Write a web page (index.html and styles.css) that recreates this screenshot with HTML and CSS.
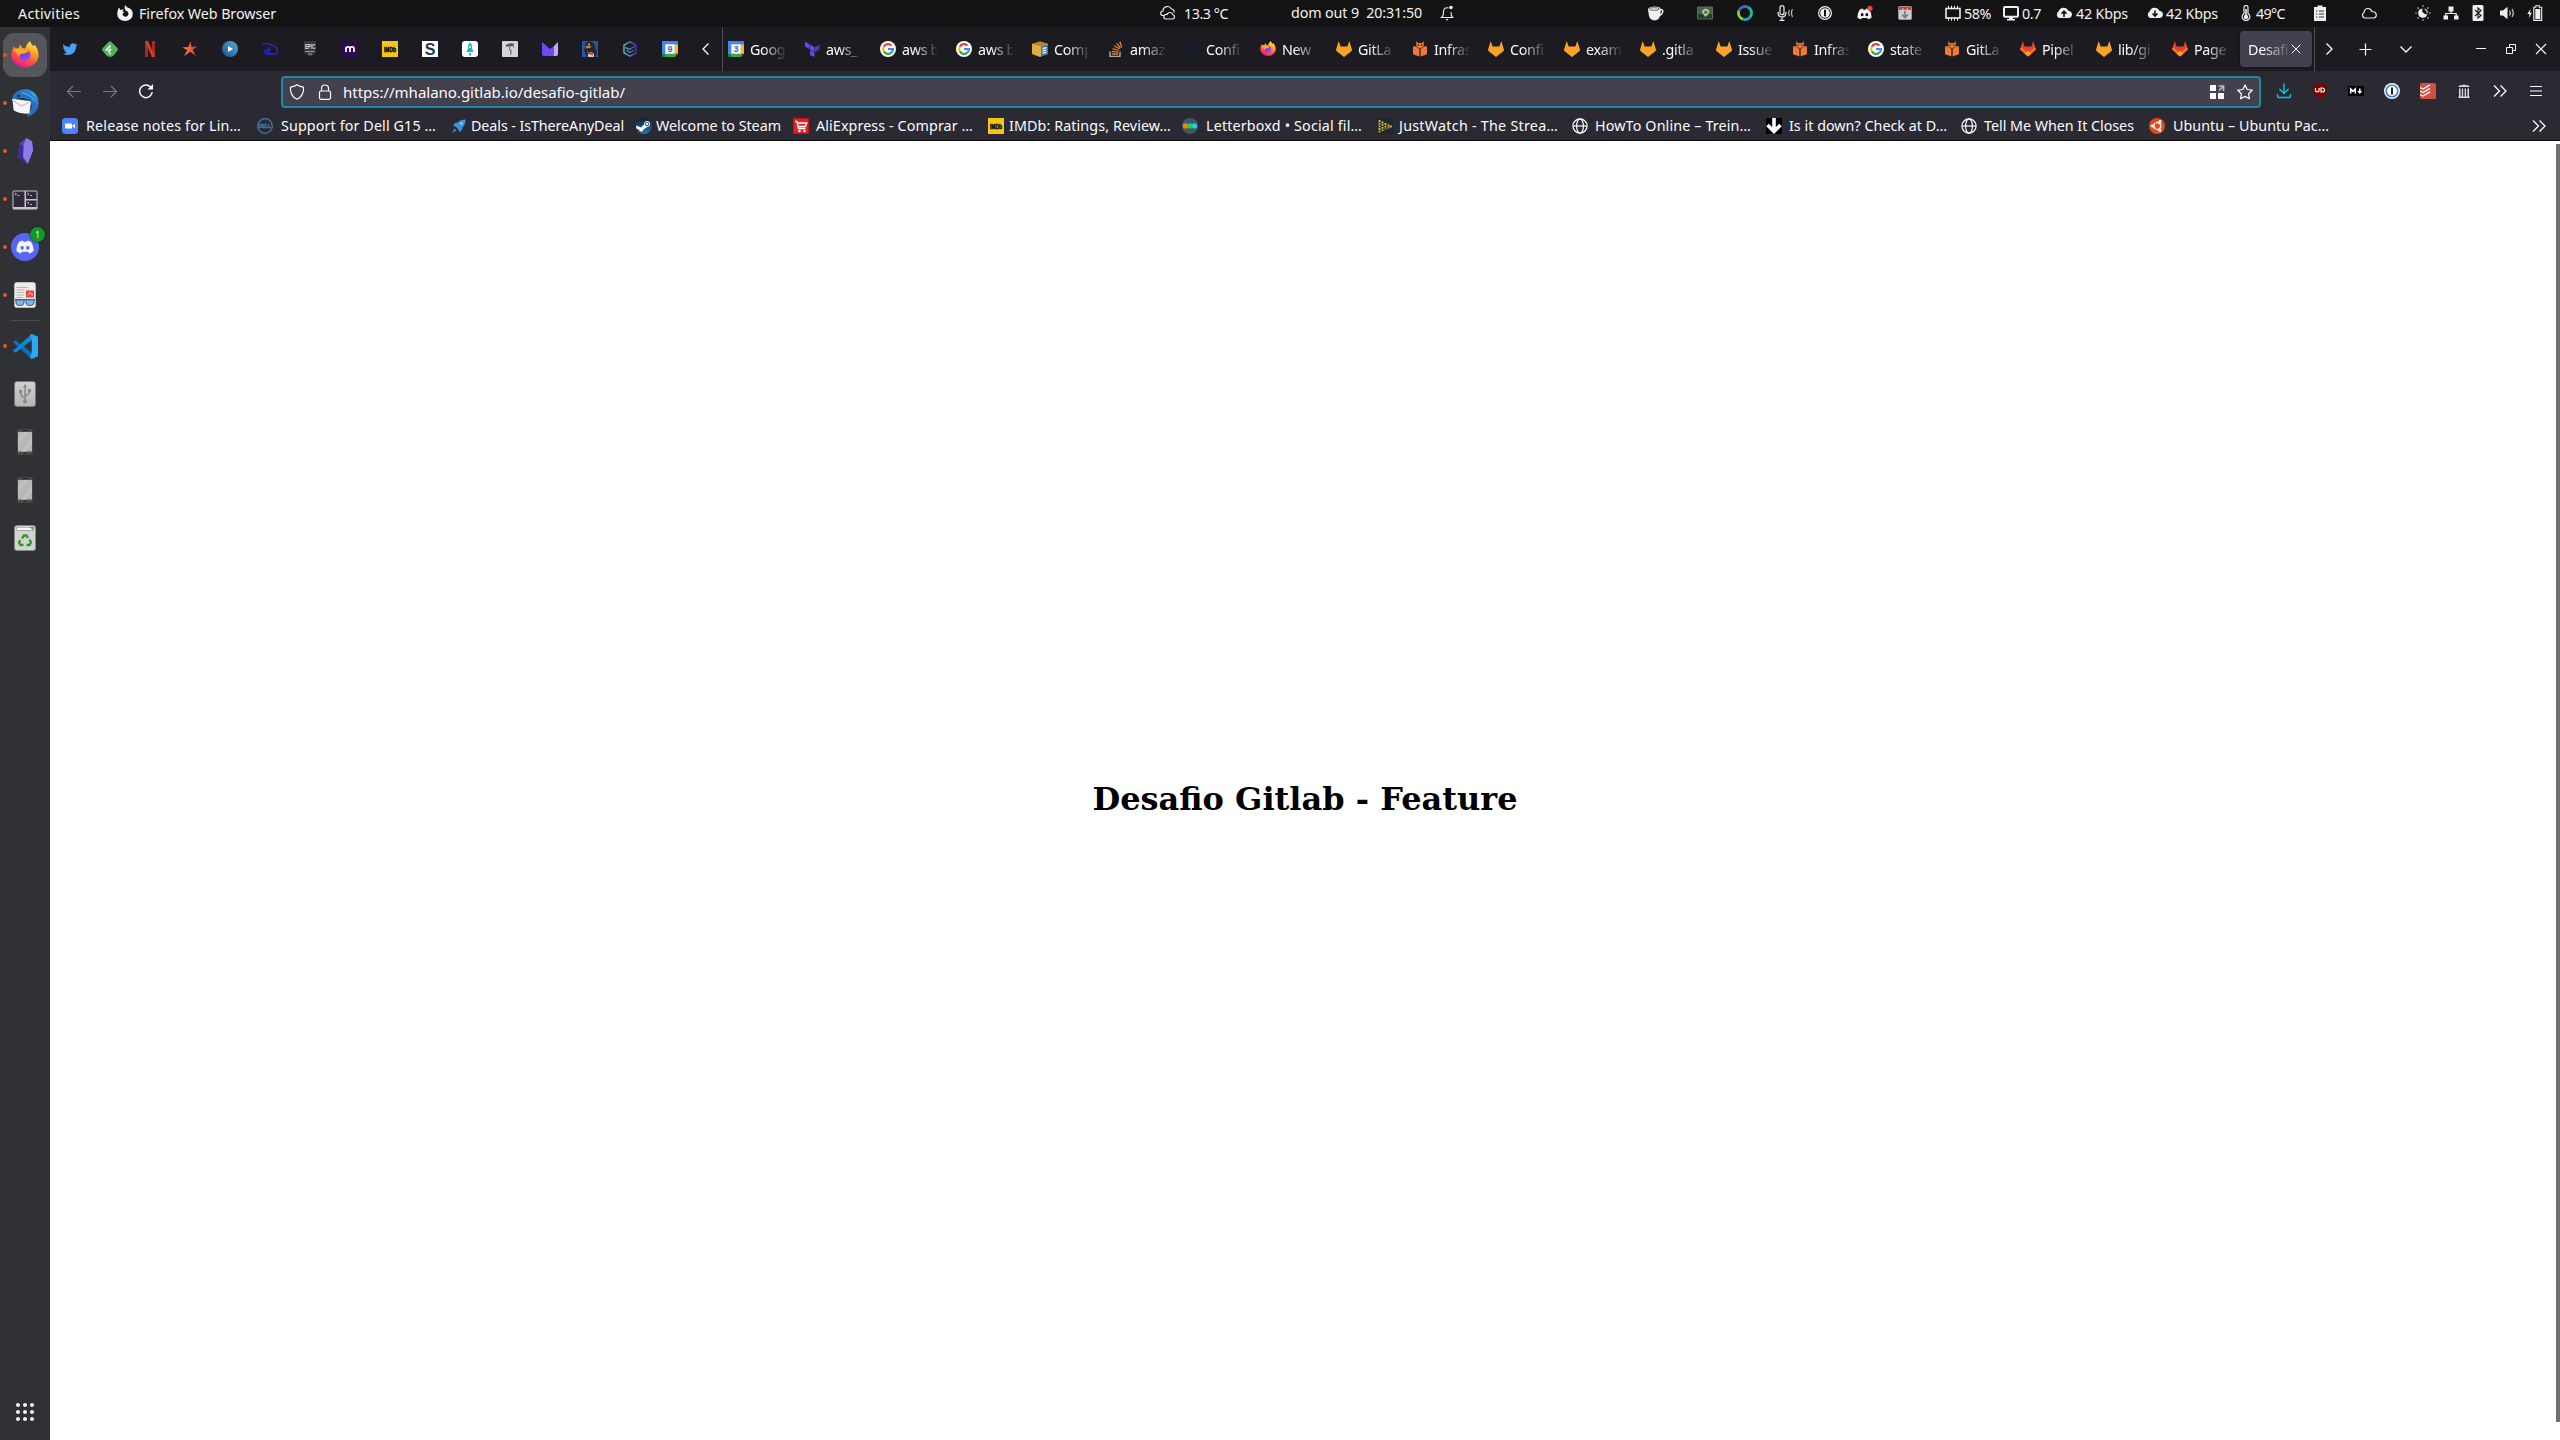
FILE: index.html
```
<!DOCTYPE html>
<html lang="pt-BR">
<head>
<meta charset="utf-8">
<title>Desafio Gitlab</title>
<link rel="stylesheet" href="styles.css">
</head>
<body>
<svg class="defs" aria-hidden="true">
  <defs>
    <linearGradient id="flame" x1=".8" y1="0" x2=".3" y2="1"><stop offset="0" stop-color="#fff44f"/><stop offset=".35" stop-color="#ffa41f"/><stop offset=".7" stop-color="#ff4a4a"/><stop offset="1" stop-color="#e31587"/></linearGradient>
    <linearGradient id="purple" x1="0" y1="0" x2="1" y2="1"><stop offset="0" stop-color="#6f2fd0"/><stop offset="1" stop-color="#9059ff"/></linearGradient>
    <linearGradient id="blue" x1="0" y1="0" x2="1" y2="1"><stop offset="0" stop-color="#1b6fc0"/><stop offset=".5" stop-color="#3c9ce8"/><stop offset="1" stop-color="#1d4fa8"/></linearGradient>
    <linearGradient id="steel" x1="0" y1="0" x2="0" y2="1"><stop offset="0" stop-color="#d0d0d0"/><stop offset="1" stop-color="#b5b5b5"/></linearGradient>
    <linearGradient id="star-fill" x1="0" y1="0" x2="1" y2="0"><stop offset="0" stop-color="#f5a033"/><stop offset=".5" stop-color="#ee5d36"/><stop offset="1" stop-color="#c43a5c"/></linearGradient>
    <linearGradient id="hex-line" x1="0" y1="0" x2="1" y2="0"><stop offset="0" stop-color="#52c4b0"/><stop offset="1" stop-color="#4a35c0"/></linearGradient>
    <linearGradient id="play-fill" x1="0" y1="1" x2="1" y2="0"><stop offset="0" stop-color="#1c4f8c"/><stop offset="1" stop-color="#55b0dc"/></linearGradient>
    <linearGradient id="steam-fill" x1="0" y1="0" x2="0" y2="1"><stop offset="0" stop-color="#111d3d"/><stop offset="1" stop-color="#1b78b4"/></linearGradient>
  </defs>
  <symbol id="firefox" viewBox="0 0 16 16"><path fill="url(#flame)" d="M1.7 3.2 3 4.5 4.2 4.3 5.2 2 6.5 4 8 4.3Q9 1.4 10.9 0 11.2 2 13 3l.4-1Q16 5 15.7 9A7.8 7.2 0 0 1 .3 9Q0 5.8 1.7 3.2Z"/><circle cx="8" cy="8.2" r="3.2" fill="url(#purple)"/><path fill="#ffa62b" d="M1.5 4.5Q5 3.5 8 5.2L10 5.4Q9 7.3 6.8 7.2 5 7.2 4.7 9 3 7 1.5 4.5Z"/></symbol>
  <symbol id="firefox-mono" viewBox="0 0 16 16"><path fill="#f2f2f2" d="M8 0l2 2.2Q15.8 3.8 15.8 9A7.8 7 0 0 1 .2 9Q0 5 2.2 2.5L3.4 5l3.5-.8L5.3 6.4 7.5 7 5.5 8.7A3 2.8 0 1 0 10.7 7Q10 5.8 8.5 5.4 7 3 8 0Z"/></symbol>
  <symbol id="thunderbird" viewBox="0 0 16 16"><path fill="url(#blue)" d="M2.500 2.200Q5.500-.4 10 .3 15.800 2 15.900 8 15.500 14.500 9 15.800L10 14 14 7 5 4 .3 7Q.8 3.700 2.500 2.200Z"/><path fill="#f6f6f8" d="M.8 5.500 11.500 7 10.500 14Q5 14.500 1.500 12.200Z"/><path d="M1 6.500 6 9.700l5.300-2.500" fill="none" stroke="#b7bdc8" stroke-width=".6"/><path fill="#2470bd" d="M2.500 2.500Q7-.5 11.500 2.800 15.500 6.500 13 12L11 14.500Q12.500 10 11.200 7.200 8 4.500 4 5.400L.9 5.700Q1 4 2.500 2.500Z"/><path d="M6 2.200Q11 2.500 13.500 7" fill="none" stroke="#4cb0ee" stroke-width=".8"/><circle cx="4.300" cy="4" r=".7" fill="#0b2d5c"/></symbol>
  <symbol id="obsidian" viewBox="0 0 16 16"><path fill="#5b45b8" d="M8.700 0 4.500 3.500 3.400 12 9.700 16 11.300 12.200 13 7.500 12.300 2Z"/><path fill="#8c7ae6" d="M8.700 0 12.300 2 13 7.500 9.700 16 6.800 12 7 4.800Z"/><path fill="#3d2d8c" d="M4.500 3.500 7 4.800 6.800 12 9.700 16 3.400 12Z"/></symbol>
  <symbol id="terminator" viewBox="0 0 26 20"><rect x=".5" y=".5" width="25" height="19" rx="1.500" fill="#c9c5c2"/><path fill="#2e2838" d="M1.500 1.500h11v15.500h-11zM14 1.500h10.500v7.500H14zM14 10.500h10.500V17H14z"/><path d="M3 3l1.600 1L3 5M5.500 5.500h2M15.500 3l1.500 1-1.500 1M18 5.500h2M15.500 12l1.500 1-1.500 1M18 14.500h2" fill="none" stroke="#ddd" stroke-width=".8"/></symbol>
  <symbol id="discord-face" viewBox="0 0 16 12"><path fill="#f4f4f6" d="M3 1.200 6 .2 6.800 1.400H9.200L10 .2 13 1.200Q15.800 5 15.600 9.600 14 11.300 11.700 11.700L10.800 10.200H5.200L4.300 11.700Q2 11.300.4 9.600.2 5 3 1.200Z"/><ellipse cx="5.500" cy="6.700" rx="1.500" ry="1.700" fill="var(--eye)"/><ellipse cx="10.500" cy="6.700" rx="1.500" ry="1.700" fill="var(--eye)"/></symbol>
  <symbol id="discord" viewBox="0 0 28 28"><circle cx="14" cy="14" r="14" fill="#5865f2"/><use href="#discord-face" x="5" y="7" width="18" height="14"/></symbol>
  <symbol id="reader" viewBox="0 0 22 26"><rect x=".3" y=".3" width="21.400" height="25.400" rx="2.500" fill="#eeece8"/><path d="M2.500 5.500h11M2.500 8h8M2.500 10.500h8M2.500 13h8M2.500 15.500h6" stroke="#b9b6b1" stroke-width="1"/><path d="M12 8.500h8v7h-8z" fill="#ec4238"/><path d="m14 13.500 2-3 2 3M15 10.500l4 2" stroke="#ffb4aa" fill="none"/><path d="M1 17.700h20" stroke="#386fa8" stroke-width="1.500"/><g fill="#89b5de" stroke="#386fa8" stroke-width="1.200"><path d="M2 18h8v2.500q-.5 3-4 3t-4-3ZM12 18h8v2.500q-.5 3-4 3t-4-3Z"/></g></symbol>
  <symbol id="vscode" viewBox="0 0 24 24"><path fill="#0872bd" d="M0 8l2.500-2L18 18v6L0 8Z"/><path fill="#1487d4" d="M0 16l2.500 2L18 6V0L0 16Z"/><path fill="#2ba8f2" d="M18 0l6 2.700v18.600L18 24l-1.500-1.200L18 17.500v-11L16.500 1Z"/></symbol>
  <symbol id="usb" viewBox="0 0 22 26"><rect x=".5" y=".5" width="21" height="25" rx="2.500" fill="url(#steel)" stroke="#777"/><path d="M11 5v15M11 17Q6.500 15 6.500 11M11 15q4.500-1.500 4.500-5" stroke="#888" stroke-width="1.500" fill="none"/><path fill="#888" d="M11 3l2 3.500H9ZM5 9h3v3H5zM14 8h3v3h-3z"/><circle cx="11" cy="20.500" r="2" fill="#888"/></symbol>
  <symbol id="phone" viewBox="0 0 16 26"><rect x=".3" y=".3" width="15.400" height="25.400" rx="2" fill="#4d4e4b"/><path d="M1 3h14v19.500H1z" fill="#b6b7b6"/><path d="M11 3 1 15v-5L7 3ZM15 8 4 22.500h5l6-8Z" fill="#c0c1c0"/><path d="M5 1.500h6M6 24.200h4" stroke="#242424"/></symbol>
  <symbol id="trash" viewBox="0 0 22 26"><rect x=".5" y=".5" width="21" height="25" rx="2.500" fill="#d3d4cf" stroke="#888"/><path d="M2.500 2h17v3.500h-17z" fill="#777"/><path d="M3 2.500h13l3 2.500H3z" fill="#fff"/><path d="M8 13.500 10 10.500h2.500l1.500 2.500M15.500 14.500l1.500 3-1.500 2.500h-3M9.500 20H6.500L5 17.500l1.500-2.500" fill="none" stroke="#349432" stroke-width="2.300"/></symbol>
  <symbol id="apps" viewBox="0 0 18 18"><g fill="#f2f2f2"><circle cx="2" cy="2" r="2"/><circle cx="9" cy="2" r="2"/><circle cx="16" cy="2" r="2"/><circle cx="2" cy="9" r="2"/><circle cx="9" cy="9" r="2"/><circle cx="16" cy="9" r="2"/><circle cx="2" cy="16" r="2"/><circle cx="9" cy="16" r="2"/><circle cx="16" cy="16" r="2"/></g></symbol>

  <symbol id="weather" viewBox="0 0 16 16"><path fill="none" stroke="#eee" stroke-width="1.200" d="M5.500 14h7a2.200 2.200 0 0 0 .5-4.300A3.200 3.200 0 0 0 7 9.500 2.300 2.300 0 0 0 5.500 14ZM4 10.500H3A2.200 2.200 0 0 1 3 6 4.500 4.500 0 0 1 11.500 4Q14.500 4.500 14 7.500"/></symbol>
  <symbol id="bell" viewBox="0 0 16 16"><path fill="none" stroke="#eee" stroke-width="1.100" d="M9.500 3Q5 1.800 4.500 6.500 4.500 11 2.500 12.500h11Q12 11 12 7"/><circle cx="12" cy="2.500" r="1.700" fill="#fff"/><path d="M6.500 14h3L8 15.800z" fill="#eee"/></symbol>
  <symbol id="cup" viewBox="0 0 16 16"><path fill="#eee" d="M0 4.500Q0 2 6 1.500q6 0 6.500 2.200Q16 4 15.500 7q-1 3-3.500 4Q11 15 6.500 15.500 2 15 1 11ZM12.800 5.400l-.4 3.800Q14.200 8 14 6q-.2-.8-1.200-.6Z"/><ellipse cx="6.300" cy="4" rx="5" ry="1.300" fill="none" stroke="#444" stroke-width=".8"/></symbol>
  <symbol id="board" viewBox="0 0 16 16"><path fill="#456349" stroke="#5c6c5e" d="M.5 2h15v12H.5z"/><path fill="#223d2b" d="M1 9h14v4.500H1z"/><path fill="#b8c99c" d="M5 6q3.500-5 7.500 0l-1 3L8.500 12 6 9Z"/><circle cx="8.700" cy="7.300" r="1.800" fill="#597451"/></symbol>
  <symbol id="ring" viewBox="0 0 16 16"><g fill="none" stroke-width="2.800"><path stroke="#3a69d8" d="M2 5.500A6.500 6.500 0 0 1 11.300 2.400"/><path stroke="#1bbd9a" d="M11.300 2.400A6.500 6.500 0 0 1 12.500 12.700"/><path stroke="#269fd0" d="M12.500 12.700A6.500 6.500 0 0 1 6 14.200"/><path stroke="#8ad035" d="M6 14.200A6.500 6.500 0 0 1 2 5.500"/></g></symbol>
  <symbol id="mic" viewBox="0 0 16 16"><g fill="none" stroke="#eee" stroke-width="1.200"><rect x="3" y=".7" width="4" height="9" rx="2"/><path d="M1 7q0 5 4 5t4-5M5 12v3M2.500 15.400h5"/><path stroke="#bbb" d="M12.500 5q-1.500 3 0 6M15.500 4q-2 4 0 8"/></g></symbol>
  <symbol id="onepass-mono" viewBox="0 0 16 16"><circle cx="8" cy="8" r="6.400" fill="none" stroke="#eee" stroke-width="1.200"/><circle cx="8" cy="8" r="4.800" fill="#eee"/><path d="M7 4.700h2v6.600H7z" fill="#111"/></symbol>
  <symbol id="discord-tray" viewBox="0 0 16 16"><use href="#discord-face" y="3" width="15" height="12"/><circle cx="13" cy="3.300" r="2.600" fill="#ed4245"/></symbol>
  <symbol id="package" viewBox="0 0 16 16"><rect x="1.500" y="1.500" width="13" height="13" rx="1" fill="#ccc" stroke="#999"/><path fill="#f42c34" d="M2 2h3v3H2zM11 2h3v3h-3zM5 2h6v1.500H5zM6.500 2h3v3h-3z"/><path d="M8 6v6M5 9.500l3 3 3-3" stroke="#777" stroke-width="1.600" fill="none"/></symbol>
  <symbol id="chip" viewBox="0 0 16 16"><rect x="1" y="3.500" width="14" height="9.500" fill="none" stroke="#eee" stroke-width="1.600"/><path d="M3.500 .8v3M6.500 .8v3M9.500 .8v3M12.500 .8v3M3.500 12.700v3M6.500 12.700v3M9.500 12.700v3M12.500 12.700v3" stroke="#eee"/></symbol>
  <symbol id="monitor" viewBox="0 0 16 16"><rect x="1" y="2" width="14" height="9.800" rx="1" fill="none" stroke="#eee" stroke-width="2"/><path d="M6 12h4v2h2v1.500H4V14h2z" fill="#eee"/></symbol>
  <symbol id="cloud-up" viewBox="0 0 16 16"><path fill="#eee" d="M3.500 13A3.500 3.500 0 0 1 2.500 6.600Q4 2.500 7.500 2.700q3.500 0 4.800 3Q16 6.500 16 9.500 15.500 13 12.500 13Z"/><path d="M8 12V7M5.500 8.800 8 6.200l2.500 2.600" fill="none" stroke="#111" stroke-width="1.600"/></symbol>
  <symbol id="cloud-down" viewBox="0 0 16 16"><path fill="#eee" d="M3.500 13A3.500 3.500 0 0 1 2.500 6.600Q4 2.500 7.500 2.700q3.500 0 4.800 3Q16 6.500 16 9.500 15.500 13 12.500 13Z"/><path d="M8 5.500v5M5.500 8.500 8 11l2.500-2.500" fill="none" stroke="#111" stroke-width="1.600"/></symbol>
  <symbol id="thermo" viewBox="0 0 16 16"><path fill="none" stroke="#eee" stroke-width="1.200" d="M6 8.500v-6a2 2 0 0 1 4 0v6a3.800 3.800 0 1 1-4 0Z"/><path d="M8 4v8" stroke="#eee" stroke-width="1.600"/><circle cx="8" cy="12" r="2.200" fill="#eee"/></symbol>
  <symbol id="clipboard" viewBox="0 0 16 16"><path fill="#eee" d="M2 2h3.500V.5h5V2H14v14H2z"/><path d="M4 6h1.500M7 6h5M4 9h1.500M7 9h5M4 12h1.500M7 12h5" stroke="#333"/></symbol>
  <symbol id="cloud" viewBox="0 0 16 16"><path fill="none" stroke="#eee" stroke-width="1.200" d="M3.500 13A3 3 0 0 1 3 7.500Q3.500 3.500 7 3.500q3 0 4 3 4 0 4.300 3.500 0 3-3.300 3Z"/></symbol>
  <symbol id="sun" viewBox="0 0 16 16"><path fill="#eee" d="M7.500 3.500A4 4 0 0 0 12.300 9 4.600 4.600 0 1 1 7.500 3.500Z"/><path d="M9.500 4a4 4 0 0 1 2.800 4M8 .2v1.600M8 14.200v1.600M.2 8h1.600M14.200 8h1.600M2.500 2.500l1.100 1.100M12.400 12.400l1.100 1.100M2.500 13.500l1.100-1.100M12.400 3.600l1.100-1.100" stroke="#ccc" fill="none" stroke-width="1.200"/></symbol>
  <symbol id="network" viewBox="0 0 16 16"><path fill="#eee" d="M5.500 1.500h5v5h-5zM.5 10.500h4.500v4H.5zM11 10.500h4.500v4H11z"/><path d="M8 6v2.500M2.800 11V8.500h10.400V11" fill="none" stroke="#eee" stroke-width="1.200"/></symbol>
  <symbol id="bluetooth" viewBox="0 0 16 16"><rect x="2.500" y="0" width="11" height="16" rx="1.500" fill="#eee"/><path d="M5 5l6 5.500L8 13V3l3 2.500L5 11" fill="none" stroke="#222" stroke-width="1.200"/></symbol>
  <symbol id="volume" viewBox="0 0 16 16"><path fill="#eee" d="M1 5.500h3L8.500 1.800v12.400L4 10.500H1z"/><path d="M10.500 5.500q1.500 2.500 0 5M13 4q2.500 4 0 8" fill="none" stroke="#ccc" stroke-width="1.200"/></symbol>
  <symbol id="battery" viewBox="0 0 16 16"><path fill="none" stroke="#eee" stroke-width="1.100" d="M6.800 2.200h2V.8h3.400v1.400h2.500v13.200H6.800z"/><path fill="#eee" d="M8.300 4h5v10h-5zM3.500 4 .3 9H2.500L1.800 13 5 7.800H3z"/></symbol>

  <symbol id="twitter" viewBox="0 0 16 16"><path fill="#4aa0ee" d="M1 3.300Q4 6.200 7.800 6.200 7.600 2.700 10.800 2.300q1.500 0 2.300 1l1.900-.7-1 1.700 1.500-.3-1.500 1.700Q14 11 9.500 13.300 5 15 1 12.800q2.500 0 4-1.200-2.300-.3-2.800-2.200h1.300Q1.200 8.500 1 6.200l1.300.4Q.3 5 1 3.300Z"/></symbol>
  <symbol id="feedly" viewBox="0 0 16 16"><path fill="#56b159" d="M6.500 1Q8-.5 9.500 1l5.800 6Q16.400 8.500 15.300 10L11 15q-.8.700-2 .7H7Q5.800 15.700 5 15L.7 10Q-.4 8.500.7 7Z"/><path d="M4 9.500 8.500 4.500M6.200 11 9 8M7.500 13l1-1" stroke="#fff" stroke-width="1.800"/></symbol>
  <symbol id="netflix" viewBox="0 0 16 16"><path fill="#a9291f" d="M3 0h3v16H3zM10 0h3v16h-3z"/><path fill="#dd3a2c" d="M3 0h3l7 16h-3z"/></symbol>
  <symbol id="star-five" viewBox="0 0 16 16"><path fill="url(#star-fill)" d="M8.500.5 9.700 6 15.500 5.200 10.700 8.800 13.800 15 8.300 10.800 2 15 5.400 9 .3 6.500l6-.4Z"/></symbol>
  <symbol id="play" viewBox="0 0 16 16"><circle cx="8" cy="8" r="8" fill="url(#play-fill)"/><path fill="#fff" d="M6 5l5 3-5 3Z"/></symbol>
  <symbol id="disney" viewBox="0 0 16 16"><path d="M.8 4.500Q1.500 1.800 7 3q8.500 2.500 8.500 6.500 0 4.300-6 3.800-5.500-.3-6.700-2.300Q2.500 8.700 8.500 9M7 6v7.500" fill="none" stroke="#2626d8" stroke-width="1.500"/></symbol>
  <symbol id="epic" viewBox="0 0 16 16"><path fill="#39393b" d="M2 1q0-1 1-1h10q1 0 1 1v11l-6 3.800L2 12Z"/><text x="8" y="8" font-family="Liberation Sans" font-weight="700" font-size="8" text-anchor="middle" textLength="10" lengthAdjust="spacingAndGlyphs" fill="#e4e4e4">EPIC</text><path d="M3.500 10.500h9M6 13h4" stroke="#999"/></symbol>
  <symbol id="letter-m" viewBox="0 0 16 16"><path fill="#2d0c4d" d="M0 0h16v16H0z"/><path d="M4 11V6M4 8q0-2.200 2-2.200T8 8v3M8 8q0-2.200 2-2.200T12 8v3" fill="none" stroke="#fff" stroke-width="1.700"/></symbol>
  <symbol id="imdb" viewBox="0 0 16 16"><path fill="#f5c518" d="M0 0h16v16H0z"/><text x="8" y="10.500" font-family="Liberation Sans" font-weight="700" font-size="6.500" stroke="#111" stroke-width=".5" text-anchor="middle" textLength="12" lengthAdjust="spacingAndGlyphs">IMDb</text></symbol>
  <symbol id="letter-s" viewBox="0 0 16 16"><path fill="#fff" d="M0 0h16v16H0z"/><text x="8" y="13.800" font-family="Liberation Sans" font-weight="700" font-size="16" text-anchor="middle" fill="#183a5c">S</text></symbol>
  <symbol id="rocket-tab" viewBox="0 0 16 16"><rect width="16" height="16" rx="3" fill="#fff"/><path fill="#17b8c0" d="M8 1.500q2.500 2 2 6l1.500 3.500h-7L6 7.500q-.5-4 2-6ZM7 12h2v2.500H7z"/><circle cx="8" cy="6" r="1" fill="#fff"/></symbol>
  <symbol id="sketch" viewBox="0 0 16 16"><rect width="16" height="16" rx="1" fill="#d5d5d4"/><path fill="#555" d="M3.500 4.500Q7 1.500 11.500 2.500L12 4 9 5.500 4 5.500Z"/><path d="M7.500 6 8 9.500M9 9 8.700 14M11 4l.5 2.500" stroke="#666" fill="none" stroke-width="1.100"/></symbol>
  <symbol id="protonmail" viewBox="0 0 16 16"><path fill="#7048f2" d="M0 1l8 7 4-3v10H2q-2 0-2-2Z"/><path fill="#c2a8ff" d="M16 1v12q0 2-2 2h-2V5Z"/></symbol>
  <symbol id="tux" viewBox="0 0 16 16"><path fill="#2056b0" d="M0 0h16v16H0z"/><path fill="#26282b" d="M3 6Q2 1 7 .5t6 4.500l2 8-2 3H5L2 10Z"/><path fill="#ccc" d="M6 13l3-2 3 2v3H6z"/><path fill="#c98a35" d="M3 5.500l4-1 3 1.500-5 1.500Z"/><circle cx="7" cy="3.300" r=".9" fill="#ddd"/><path fill="#c92a2a" d="M5 10l6 3v1.500L5 12Z"/></symbol>
  <symbol id="hexagon" viewBox="0 0 16 16"><path fill="none" stroke="url(#hex-line)" stroke-width="1.400" d="M8 .8 14 4.200v7.600L8 15.200 2 11.800V4.200ZM3.500 6.500 7.500 8.500 13 5M4.500 9.500 8 11.500l4-2.500"/></symbol>
  <symbol id="calendar-9" viewBox="0 0 16 16"><use href="#calendar-base"/><text x="8" y="11.300" font-family="Liberation Sans" font-weight="700" font-size="9" text-anchor="middle" fill="#326bd0">9</text></symbol>
  <symbol id="calendar-3" viewBox="0 0 16 16"><use href="#calendar-base"/><text x="8" y="11.300" font-family="Liberation Sans" font-weight="700" font-size="9" text-anchor="middle" fill="#326bd0">3</text></symbol>
  <symbol id="calendar-base" viewBox="0 0 16 16"><path fill="#4285f4" d="M0 0h16v13H0z"/><path fill="#fbbc04" d="M12.500 3.500H16V13h-3.500z"/><path fill="#188038" d="M0 13h13v3H0z"/><path fill="#34a853" d="M3 12.500h10V16H3z"/><path fill="#ea4335" d="M13 12.500h3L13 16z"/><path fill="#fff" d="M3.300 3.300h9.400v9.400H3.300z"/></symbol>
  <symbol id="terraform" viewBox="0 0 16 16"><path fill="#5c4ee5" d="M1 .5l4.500 2.700v5L1 5.500ZM6 3.500l4.500 2.700v5L6 8.500ZM6 9.300l4.500 2.500V16L6 14Z"/><path fill="#4040b2" d="M11 6.200l4.500-2.700v5L11 11.200Z"/></symbol>
  <symbol id="google" viewBox="0 0 16 16"><circle cx="8" cy="8" r="8" fill="#fff"/><g fill="none" stroke-width="2.200"><path stroke="#ea4335" d="M3.700 5.700A4.900 4.900 0 0 1 11.500 4.500"/><path stroke="#fbbc05" d="M3.700 5.700A4.900 4.900 0 0 0 3.700 10.300"/><path stroke="#34a853" d="M3.700 10.300A4.900 4.900 0 0 0 11.300 11.600"/><path stroke="#4285f4" d="M11.300 11.600Q12.900 10.300 12.900 8H8"/></g></symbol>
  <symbol id="awsbox" viewBox="0 0 16 16"><path fill="#e0ad43" d="M0 3 8 .5 16 3v9.500L8 16 0 13Z"/><path fill="#b98427" d="M0 3l8-2.500L16 3 8 5Z"/><path fill="#f7d27b" d="M4 2l8 2"/><path fill="#2d79b8" d="M9 5l7-1.500v9.800L9 15.500Z"/><path d="M10.500 7.500l4-.8M10.500 9.800l4-.6M10.500 12.200l4-.8" stroke="#fff" stroke-width="1.300"/></symbol>
  <symbol id="stackoverflow" viewBox="0 0 16 16"><path d="M2 10.500v5h10v-5" fill="none" stroke="#aaa" stroke-width="1.400"/><path d="M3.800 13h6.500M3.900 10.500l6.400.7M4.600 7.700l6 1.800M6.200 4.700l5.400 3.200M8.500 2.200l4 4.800M11.800.5l2 6" stroke="#e87722" stroke-width="1.300"/></symbol>
  <symbol id="darkring" viewBox="0 0 16 16"><circle cx="8" cy="8" r="6.200" fill="none" stroke="#161f38" stroke-width="3" stroke-dasharray="3.900 1"/></symbol>
  <symbol id="gitlab-flat" viewBox="0 0 16 16"><path fill="#fca326" d="M2.700 0 4.600 5.500h6.800L13.300 0 16 8.800q0 1-1 1.700L8 16 1 10.500Q0 9.800 0 8.800Z"/></symbol>
  <symbol id="gitlab" viewBox="0 0 16 16"><path fill="#e24329" d="M2.700 0 4.600 5.500h6.800L13.300 0 16 8.500 8 15.500 0 8.500Z"/><path fill="#fc6d26" d="M0 8.500 1 6l4.500 4L8 15.500ZM16 8.500 15 6l-4.500 4L8 15.500Z"/><path fill="#fca326" d="M4.500 12.500 8 9.800l3.500 2.700L8 15.500Z"/></symbol>
  <symbol id="fox-book" viewBox="0 0 16 16"><path fill="#ee7935" d="M4.300 0 6 2h4l1.700-2v5.500L8 7.500 4.300 5.500ZM1 5.500l2.500-.2L7.400 8v7.500L1 13.200ZM15 5.500l-2.500-.2L8.600 8v7.500L15 13.200Z"/><path fill="#1c1b22" d="M5.500 3.500h1.800v1H5.500zM8.700 3.500h1.800v1H8.700z"/></symbol>

  <symbol id="left" viewBox="0 0 16 16"><path d="M10.500 2.500 5 8l5.500 5.500" fill="none" stroke="#fbfbfe" stroke-width="1.300"/></symbol>
  <symbol id="right" viewBox="0 0 16 16"><path d="M5.500 2.500 11 8l-5.500 5.500" fill="none" stroke="#fbfbfe" stroke-width="1.300"/></symbol>
  <symbol id="down" viewBox="0 0 16 16"><path d="M2.500 5.500 8 11l5.500-5.500" fill="none" stroke="#fbfbfe" stroke-width="1.300"/></symbol>
  <symbol id="plus" viewBox="0 0 16 16"><path d="M2.500 8.500h12M8.500 2.500v12" stroke="#fbfbfe" stroke-width="1.200"/></symbol>
  <symbol id="minimize" viewBox="0 0 16 16"><path d="M3 7.500h10" stroke="#fbfbfe"/></symbol>
  <symbol id="restore" viewBox="0 0 16 16"><path d="M3.500 6.500h6v6h-6zM6.500 6V3.500h6v6H10" fill="none" stroke="#fbfbfe"/></symbol>
  <symbol id="close" viewBox="0 0 16 16"><path d="M3 3l10 10M13 3 3 13" stroke="#fbfbfe" stroke-width="1.100"/></symbol>
  <symbol id="back" viewBox="0 0 16 16"><path d="M15 8.500H1.500M7 3 1.500 8.500 7 14" fill="none" stroke="#7c7b83" stroke-width="1.200"/></symbol>
  <symbol id="forward" viewBox="0 0 16 16"><path d="M1 8.500h13.500M9 3l5.500 5.500L9 14" fill="none" stroke="#7c7b83" stroke-width="1.200"/></symbol>
  <symbol id="reload" viewBox="0 0 16 16"><path d="M14.200 9A6.300 6.300 0 1 1 12.500 4" fill="none" stroke="#fbfbfe" stroke-width="1.500"/><path fill="#fbfbfe" d="M15 1v5.500H9.500z"/></symbol>
  <symbol id="shield" viewBox="0 0 16 16"><path d="M8 .8Q11 3 14.500 3.200 15.300 11.500 8 15.300.7 11.500 1.500 3.200 5 3 8 .8Z" fill="none" stroke="#fbfbfe" stroke-width="1.200"/></symbol>
  <symbol id="lock" viewBox="0 0 16 16"><rect x="2.500" y="7" width="11" height="8.300" rx="1.500" fill="none" stroke="#fbfbfe" stroke-width="1.200"/><path d="M4.500 7V4.500a3.500 3.500 0 0 1 7 0V7" fill="none" stroke="#fbfbfe" stroke-width="1.200"/></symbol>
  <symbol id="tiles" viewBox="0 0 16 16"><path fill="#fbfbfe" d="M1 1h6v6H1zM1 9h6v6H1zM9 9h6v6H9z"/><path d="M9.500 2h5v5M14.500 2 10 6.500" fill="none" stroke="#bbb" stroke-width="1.700"/></symbol>
  <symbol id="star" viewBox="0 0 16 16"><path d="M8 .9l2.200 4.600 5 .7-3.600 3.500.8 5.100L8 12.400l-4.400 2.400.8-5.100L.8 6.200l5-.7Z" fill="none" stroke="#fbfbfe" stroke-width="1.200" stroke-linejoin="round"/></symbol>
  <symbol id="download" viewBox="0 0 16 16"><path d="M8 .5v10M3.500 6 8 10.500 12.500 6M1.500 11v2q0 1.500 1.500 1.500h10q1.500 0 1.500-1.500v-2" fill="none" stroke="#00c8e6" stroke-width="1.400"/></symbol>
  <symbol id="ublock" viewBox="0 0 16 16"><path fill="#800000" d="M8 0q3 1.800 7 2Q15.500 12 8 16 .5 12 1 2 5 1.800 8 0Z"/><path d="M3.500 5v2.200q0 1.700 1.800 1.700t1.800-1.700V5M9 5h1.200q2.300 0 2.300 2t-2.300 2H9Z" fill="none" stroke="#fff" stroke-width="1.200"/></symbol>
  <symbol id="markdown" viewBox="0 0 16 16"><rect y="3" width="16" height="10" rx="1" fill="#000"/><path d="M2.700 10.500V6L5 8.300 7.300 6v4.500M11.800 5.500V9.500" fill="none" stroke="#fff" stroke-width="1.600"/><path fill="#fff" d="M9.300 8h5l-2.500 3Z"/></symbol>
  <symbol id="onepass" viewBox="0 0 16 16"><circle cx="8" cy="8" r="8" fill="#f5f5f5"/><circle cx="8" cy="8" r="5.800" fill="#fff" stroke="#3b82dc" stroke-width="1.600"/><path d="M7 4.500h2v7H7z" fill="#222"/></symbol>
  <symbol id="todoist" viewBox="0 0 16 16"><rect width="16" height="16" rx="1.500" fill="#d2503f"/><path d="M0 4.500l3 1.600 7-4.200M0 8l3 1.600 7-4.200M0 11.500l3 1.600 7-4.200" fill="none" stroke="#fff" stroke-width="1.300"/></symbol>
  <symbol id="archive" viewBox="0 0 16 16"><path fill="#ddd" stroke="#111" stroke-width=".8" d="M2 4.500V3l2-1.200h2.500L8 .8l1.500 1H12L14 3v1.500z"/><path fill="#ddd" d="M3 5.500h1.500V14H3zM5.800 5.500h1.300V14H5.800zM8.700 5.500H10V14H8.700zM11.400 5.500H13V14h-1.600zM2.500 13.500h11V15h-11z"/></symbol>
  <symbol id="chevrons" viewBox="0 0 16 16"><path d="M2 2.500 7.500 8 2 13.500M8.500 2.500 14 8l-5.500 5.500" fill="none" stroke="#fbfbfe" stroke-width="1.300"/></symbol>
  <symbol id="menu" viewBox="0 0 16 16"><path d="M2 3.500h12M2 8h12M2 12.500h12" stroke="#fbfbfe" stroke-width="1.200"/></symbol>

  <symbol id="zoom-app" viewBox="0 0 16 16"><rect width="16" height="16" rx="3.500" fill="#4f83f5"/><path fill="#fff" d="M3 5.500h6q1 0 1 1v4H4q-1 0-1-1ZM10.500 7.500 13 5.700v4.600L10.500 8.500Z"/></symbol>
  <symbol id="dell" viewBox="0 0 16 16"><circle cx="8" cy="8" r="7.300" fill="none" stroke="#427daf" stroke-width="1.300"/><text x="8" y="10" font-family="Liberation Sans" font-weight="700" font-size="5.500" text-anchor="middle" textLength="12" lengthAdjust="spacingAndGlyphs" fill="#427daf" stroke="#427daf" stroke-width=".4">DELL</text></symbol>
  <symbol id="rocket" viewBox="0 0 16 16"><path fill="#3b94dc" d="M14.500 1.500Q9 1.500 6.500 4.500L4 5 2 8l2.500.5 3 3 .5 2.500 3-2 .5-2.500Q14.500 7 14.500 1.500ZM3.500 10.500 1 15l4.500-2.500Z"/><circle cx="10.500" cy="5.500" r="1.200" fill="#a8d4f5"/></symbol>
  <symbol id="steam" viewBox="0 0 16 16"><circle cx="8" cy="8" r="8" fill="url(#steam-fill)"/><path fill="#fff" d="M0 7.500l5 2L8 6.500Q8 3 11 3t3 3q0 2.500-3 3l-3.500 2.500Q7 14 5 13.500T3 11.500L.5 10.500Z"/><circle cx="11" cy="6" r="1.800" fill="#fff" stroke="#304a70"/></symbol>
  <symbol id="aliexpress" viewBox="0 0 16 16"><rect x=".5" y=".5" width="15" height="15" fill="#e41e25" stroke="#b51a1a"/><path d="M2 3.500h2l1.500 7h7M4.700 5h9l-1.500 3.500H5" fill="none" stroke="#fff" stroke-width="1.400"/><circle cx="6.500" cy="13" r="1.200" fill="#fff"/><circle cx="11.500" cy="13" r="1.200" fill="#fff"/></symbol>
  <symbol id="letterboxd" viewBox="0 0 16 16"><circle cx="8" cy="8" r="8" fill="#445566"/><circle cx="3.500" cy="8" r="2.700" fill="#ff8000"/><circle cx="12.500" cy="8" r="2.700" fill="#40bcf4"/><circle cx="8" cy="8" r="2.700" fill="#00e054"/></symbol>
  <symbol id="justwatch" viewBox="0 0 16 16"><path fill="#1d272f" d="M0 0h16v16H0z"/><path d="M2.500 2v12.500M5.500 3.500v9.500M8.500 5v6.500M11.500 6.500v4M13.800 7.500v2" stroke="#e5b73c" stroke-width="1.900" stroke-dasharray="1.900 .8"/></symbol>
  <symbol id="globe" viewBox="0 0 16 16"><g fill="none" stroke="#fbfbfe" stroke-width="1.200"><circle cx="8" cy="8" r="7.100"/><ellipse cx="8" cy="8" rx="3.400" ry="7.100"/><path d="M1 8h14"/></g></symbol>
  <symbol id="isdown" viewBox="0 0 16 16"><path fill="#000" d="M0 0h16v16H0z"/><path d="M8 0v12M1.500 7 8 13.500 14.500 7" fill="none" stroke="#fff" stroke-width="3.600"/></symbol>
  <symbol id="ubuntu" viewBox="0 0 16 16"><circle cx="8" cy="8" r="8" fill="#e04a18"/><circle cx="8.300" cy="8" r="3.500" fill="none" stroke="#fff" stroke-width="1.600" stroke-dasharray="6.300 1"/><g fill="#fff"><circle cx="3.200" cy="8" r="1.400"/><circle cx="11" cy="3.500" r="1.400"/><circle cx="11" cy="12.500" r="1.400"/></g></symbol>
</svg>

<header class="panel">
  <span class="fit" data-w="62">Activities</span>
  <svg><use href="#firefox-mono"/></svg><span class="fit" data-w="137">Firefox Web Browser</span>
  <svg><use href="#weather"/></svg><span class="fit" data-w="44">13.3 °C</span>
  <span class="fit clock" data-w="131">dom out 9&nbsp; 20:31:50</span>
  <svg><use href="#bell"/></svg>
  <svg><use href="#cup"/></svg><svg><use href="#board"/></svg><svg><use href="#ring"/></svg><svg><use href="#mic"/></svg><svg><use href="#onepass-mono"/></svg><svg class="tray-discord"><use href="#discord-tray"/></svg><svg><use href="#package"/></svg>
  <svg><use href="#chip"/></svg><span class="fit" data-w="27">58%</span>
  <svg><use href="#monitor"/></svg><span class="fit" data-w="19">0.7</span>
  <svg><use href="#cloud-up"/></svg><span class="fit" data-w="52">42 Kbps</span>
  <svg><use href="#cloud-down"/></svg><span class="fit" data-w="52">42 Kbps</span>
  <svg><use href="#thermo"/></svg><span class="fit" data-w="29">49°C</span>
  <svg><use href="#clipboard"/></svg><svg><use href="#cloud"/></svg><svg><use href="#sun"/></svg><svg><use href="#network"/></svg><svg><use href="#bluetooth"/></svg><svg><use href="#volume"/></svg><svg><use href="#battery"/></svg>
</header>

<div class="desktop">
  <aside class="dock">
    <div class="app running active"><svg class="i28"><use href="#firefox"/></svg></div>
    <div class="app running"><svg class="i28"><use href="#thunderbird"/></svg></div>
    <div class="app running"><svg class="i26"><use href="#obsidian"/></svg></div>
    <div class="app running"><svg class="term"><use href="#terminator"/></svg></div>
    <div class="app running"><svg class="i28 dc"><use href="#discord"/></svg><span class="badge">1</span></div>
    <div class="app running"><svg class="i26"><use href="#reader"/></svg></div>
    <hr>
    <div class="app running"><svg class="i25"><use href="#vscode"/></svg></div>
    <div class="app"><svg class="i26"><use href="#usb"/></svg></div>
    <div class="app"><svg class="i26"><use href="#phone"/></svg></div>
    <div class="app"><svg class="i26"><use href="#phone"/></svg></div>
    <div class="app"><svg class="i26"><use href="#trash"/></svg></div>
    <div class="launcher"><svg class="i18"><use href="#apps"/></svg></div>
  </aside>

  <main class="browser">
    <div class="tabbar">
      <div class="pinned">
        <svg><use href="#twitter"/></svg><svg><use href="#feedly"/></svg><svg><use href="#netflix"/></svg><svg><use href="#star-five"/></svg><svg><use href="#play"/></svg><svg><use href="#disney"/></svg><svg><use href="#epic"/></svg><svg><use href="#letter-m"/></svg><svg><use href="#imdb"/></svg><svg><use href="#letter-s"/></svg><svg><use href="#rocket-tab"/></svg><svg><use href="#sketch"/></svg><svg><use href="#protonmail"/></svg><svg><use href="#tux"/></svg><svg><use href="#hexagon"/></svg><svg><use href="#calendar-9"/></svg>
      </div>
      <div class="scroll-left"><svg><use href="#left"/></svg></div>
      <div class="tabs">
        <div class="tab"><svg><use href="#calendar-3"/></svg><span>Goog</span></div>
        <div class="tab"><svg><use href="#terraform"/></svg><span>aws_</span></div>
        <div class="tab"><svg><use href="#google"/></svg><span>aws b</span></div>
        <div class="tab"><svg><use href="#google"/></svg><span>aws b</span></div>
        <div class="tab"><svg><use href="#awsbox"/></svg><span>Comp</span></div>
        <div class="tab"><svg><use href="#stackoverflow"/></svg><span>amaz</span></div>
        <div class="tab"><svg><use href="#darkring"/></svg><span>Confi</span></div>
        <div class="tab"><svg><use href="#firefox"/></svg><span>New</span></div>
        <div class="tab"><svg><use href="#gitlab-flat"/></svg><span>GitLa</span></div>
        <div class="tab"><svg><use href="#fox-book"/></svg><span>Infras</span></div>
        <div class="tab"><svg><use href="#gitlab-flat"/></svg><span>Confi</span></div>
        <div class="tab"><svg><use href="#gitlab-flat"/></svg><span>exam</span></div>
        <div class="tab"><svg><use href="#gitlab-flat"/></svg><span>.gitla</span></div>
        <div class="tab"><svg><use href="#gitlab-flat"/></svg><span>Issue</span></div>
        <div class="tab"><svg><use href="#fox-book"/></svg><span>Infras</span></div>
        <div class="tab"><svg><use href="#google"/></svg><span>state</span></div>
        <div class="tab"><svg><use href="#fox-book"/></svg><span>GitLa</span></div>
        <div class="tab"><svg><use href="#gitlab"/></svg><span>Pipel</span></div>
        <div class="tab"><svg><use href="#gitlab-flat"/></svg><span>lib/gi</span></div>
        <div class="tab"><svg><use href="#gitlab"/></svg><span>Page</span></div>
        <div class="tab selected"><span>Desafi</span><svg><use href="#close"/></svg></div>
      </div>
      <div class="tab-tools">
        <svg><use href="#right"/></svg><svg><use href="#plus"/></svg><svg><use href="#down"/></svg><svg><use href="#minimize"/></svg><svg><use href="#restore"/></svg><svg><use href="#close"/></svg>
      </div>
    </div>

    <div class="navbar">
      <div class="history"><svg><use href="#back"/></svg><svg><use href="#forward"/></svg><svg><use href="#reload"/></svg></div>
      <div class="urlbar">
        <svg><use href="#shield"/></svg><svg><use href="#lock"/></svg>
        <span class="url fit" data-w="282">https://mhalano.gitlab.io/desafio-gitlab/</span>
        <svg><use href="#tiles"/></svg><svg><use href="#star"/></svg>
      </div>
      <div class="extensions">
        <svg><use href="#download"/></svg><svg><use href="#ublock"/></svg><svg><use href="#markdown"/></svg><svg><use href="#onepass"/></svg><svg><use href="#todoist"/></svg><svg><use href="#archive"/></svg><svg><use href="#chevrons"/></svg><svg><use href="#menu"/></svg>
      </div>
    </div>

    <nav class="bookmarks">
      <svg><use href="#zoom-app"/></svg><span class="fit" data-w="155">Release notes for Lin…</span>
      <svg><use href="#dell"/></svg><span class="fit" data-w="155">Support for Dell G15 …</span>
      <svg><use href="#rocket"/></svg><span class="fit" data-w="153">Deals - IsThereAnyDeal</span>
      <svg><use href="#steam"/></svg><span class="fit" data-w="125">Welcome to Steam</span>
      <svg><use href="#aliexpress"/></svg><span class="fit" data-w="157">AliExpress - Comprar …</span>
      <svg><use href="#imdb"/></svg><span class="fit" data-w="162">IMDb: Ratings, Review…</span>
      <svg><use href="#letterboxd"/></svg><span class="fit" data-w="156">Letterboxd • Social fil…</span>
      <svg><use href="#justwatch"/></svg><span class="fit" data-w="159">JustWatch - The Strea…</span>
      <svg><use href="#globe"/></svg><span class="fit" data-w="156">HowTo Online – Trein…</span>
      <svg><use href="#isdown"/></svg><span class="fit" data-w="158">Is it down? Check at D…</span>
      <svg><use href="#globe"/></svg><span class="fit" data-w="150">Tell Me When It Closes</span>
      <svg><use href="#ubuntu"/></svg><span class="fit" data-w="156">Ubuntu – Ubuntu Pac…</span>
      <svg><use href="#chevrons"/></svg>
    </nav>

    <section class="page">
      <h1>Desafio Gitlab - Feature</h1>
      <div class="scrollbar"></div>
    </section>
  </main>
</div>
<script src="labels.js"></script>
</body>
</html>
```
FILE: styles.css
```
* { box-sizing: border-box; }
body {
  margin: 0;
  width: 2560px;
  height: 1440px;
  overflow: hidden;
  display: flex;
  flex-direction: column;
  font: 14.3px/20px "Noto Sans", "Open Sans", sans-serif;
  color: #fbfbfe;
  background: #131313;
}
svg { width: 16px; height: 16px; flex: none; display: block; overflow: visible; }
.defs { position: absolute; width: 0; height: 0; }
.fit { white-space: nowrap; justify-self: start; }

/* Top panel: one column per indicator or label */
.panel {
  height: 27px;
  padding: 0 0 1px 18px;
  display: grid;
  grid-template-columns:
    99px 22px 1021px 24px 107px 148px 209px
    49px 40px 40px 40px 40px 40px 48px
    19px 39px 19px 34px 20px 71px 19px 72px 18px 56px
    49px 54px 28px 27px 29px 28px 16px;
  align-items: center;
  color: #f2f2f2;
}
.panel .fit { padding-top: 1px; }
.panel .clock { padding-top: 0; }
.tray-discord { --eye: #131313; }

.desktop { flex: 1; display: flex; min-height: 0; }

/* Dock */
.dock {
  width: 50px;
  padding: 6px 3px 0;
  background: #303134;
  display: flex;
  flex-direction: column;
  gap: 4px;
}
.app {
  position: relative;
  height: 44px;
  flex: none;
  display: grid;
  place-items: center;
}
.app.active { background: #55565a; border-radius: 11px; }
.app.running::before {
  content: "";
  position: absolute;
  left: 0;
  top: 20px;
  width: 4px;
  height: 4px;
  border-radius: 50%;
  background: #e95420;
}
.dock hr { width: 28px; height: 1px; margin: -1px auto 0; border: 0; background: #4b4c50; flex: none; }
.dock hr + .app { margin-top: -1px; }
.i28 { width: 28px; height: 28px; }
.i26 { width: 28px; height: 26px; }
.i25 { width: 25px; height: 25px; }
.i18 { width: 18px; height: 18px; }
.term { width: 26px; height: 20px; margin-top: 2px; }
.dc { --eye: #5865f2; }
.badge {
  position: absolute;
  right: 2px;
  top: 2px;
  width: 15px;
  height: 15px;
  border-radius: 50%;
  background: #109a26;
  box-shadow: 0 0 2px #111;
  font-size: 8px;
  line-height: 15px;
  text-align: center;
}
.launcher { margin: auto 0 19px; align-self: center; }

/* Browser window */
.browser { flex: 1; min-width: 0; display: flex; flex-direction: column; }
.tabbar { height: 44px; background: #1c1b22; display: flex; align-items: center; }
.pinned { display: flex; gap: 24px; padding-left: 12px; width: 641px; }
.scroll-left { width: 32px; height: 44px; display: flex; align-items: center; padding-left: 7px; border-right: 1px solid #4e4d54; }
.tabs { display: flex; gap: 4px; width: 1591px; margin-left: -3px; }
.tab { width: 72px; height: 36px; flex: none; display: flex; align-items: center; gap: 6px; padding: 0 0 0 8px; }
.tab span {
  width: 35px;
  overflow: hidden;
  white-space: nowrap;
  padding-top: 1px;
  letter-spacing: -.3px;
  -webkit-mask-image: linear-gradient(to right, #000 35%, transparent 105%);
  mask-image: linear-gradient(to right, #000 35%, transparent 105%);
}
.tab.selected { background: #42414d; border-radius: 4px; gap: 0; box-shadow: 0 0 3px #111; }
.tab.selected span { width: 41px; }
.tab.selected svg { width: 14px; height: 14px; }
.tab-tools {
  flex: 1;
  height: 44px;
  display: grid;
  grid-template-columns: 36px 41px 75px 30px 30px 16px;
  align-items: center;
  padding-left: 6px;
  margin-left: 3px;
  border-left: 1px solid #4e4d54;
}

.navbar { height: 38px; background: #2b2a33; display: flex; align-items: center; padding-top: 2px; }
.history { width: 231px; padding-left: 16px; display: flex; gap: 20px; }
.urlbar {
  width: 1980px;
  height: 32px;
  margin-top: 2px;
  border: 2px solid #1b8ba3;
  border-radius: 4px;
  background: #42414d;
  display: flex;
  align-items: center;
  gap: 12px;
  padding: 0 6px;
}
.url { margin: 0 auto 0 -2px; padding-bottom: 1px; font-size: 15px; }
.extensions { flex: 1; display: flex; gap: 20.100px; padding-left: 14.500px; }

.bookmarks {
  height: 32px;
  background: #2b2a33;
  border-bottom: 1px solid #0c0c0d;
  padding: 3px 0 0 12px;
  display: grid;
  grid-template-columns:
    24px 171px 24px 170px 20px 165px 20px 137px 23px 172px 21px 173px
    24px 171px 22px 173px 23px 171px 23px 172px 23px 165px 24px 358px 16px;
  align-items: center;
}
.bookmarks .fit { padding-bottom: 1px; }

.page {
  flex: 1;
  position: relative;
  display: grid;
  place-items: center;
  background: #fff;
  color: #000;
  padding-top: 16px;
}
h1 { margin: 0; font: bold 32px "DejaVu Serif", serif; }
.scrollbar { position: absolute; right: 0; top: 3px; width: 4px; height: 1278px; background: #6f6f6f; }
```
FILE: labels.js
```
// Tracks each label so that it fills its slot exactly.
document.querySelectorAll('.fit').forEach(function (label) {
  var slack = Number(label.dataset.w) - label.getBoundingClientRect().width;
  label.style.letterSpacing = (slack / label.textContent.length) + 'px';
});
```
